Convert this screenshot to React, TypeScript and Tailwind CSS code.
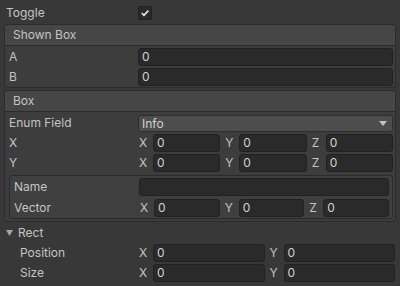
import React from "react";

const Field = ({ value = "", className = "" }: { value?: string; className?: string }) => (
  <div
    className={`h-[18px] bg-[#2a2a2a] border border-[#212121] rounded-[3px] pl-[3px] flex items-center text-[#d2d2d2] leading-none ${className}`}
  >
    {value}
  </div>
);

const Sub = ({ l, w }: { l: string; w?: string }) => (
  <div className={`flex items-center ${w ?? "flex-1"} min-w-0`}>
    <span className="w-[15px] shrink-0 pl-[1px] text-[#c4c4c4]">{l}</span>
    <Field value="0" className="flex-1 min-w-0" />
  </div>
);

const Vec3 = () => (
  <div className="flex-1 flex gap-[4px] min-w-0">
    <Sub l="X" />
    <Sub l="Y" />
    <Sub l="Z" />
  </div>
);

const Vec2 = () => (
  <div className="flex-1 flex gap-[4px] min-w-0">
    <Sub l="X" />
    <Sub l="Y" />
  </div>
);

const Row = ({ label, lw, children }: { label: string; lw: string; children: React.ReactNode }) => (
  <div className="flex items-center h-[18px]">
    <div className={`${lw} shrink-0 text-[#c4c4c4]`}>{label}</div>
    {children}
  </div>
);

const Header = ({ title }: { title: string }) => (
  <div className="h-[21px] bg-[#464646] border-b border-[#2b2b2b] flex items-center pl-[8px] text-[#c4c4c4] rounded-t-[3px]">
    {title}
  </div>
);

export default function App() {
  return (
    <div
      className="w-[400px] h-[286px] bg-[#383838] text-[12px] text-[#c4c4c4] overflow-hidden pt-[4px]"
      style={{ fontFamily: "Inter, 'Noto Sans', sans-serif" }}
    >
      {/* Toggle */}
      <div className="flex items-center h-[18px] pl-[6px]">
        <div className="w-[132px] shrink-0">Toggle</div>
        <div className="w-[14px] h-[14px] bg-[#2a2a2a] border border-[#202020] rounded-[2px] flex items-center justify-center">
          <svg width="10" height="10" viewBox="0 0 10 10">
            <path d="M1.8 5.2 L4 7.3 L8.3 2.6" stroke="#e8e8e8" strokeWidth="1.6" fill="none" />
          </svg>
        </div>
      </div>

      {/* Shown Box */}
      <div className="mt-[2px] ml-[4px] w-[392px] bg-[#3d3d3d] border border-[#2b2b2b] rounded-[3px]">
        <Header title="Shown Box" />
        <div className="flex flex-col gap-[2px] pt-[2px] pb-[1px] pl-[4px] pr-[2px]">
          <Row label="A" lw="w-[129px]">
            <Field value="0" className="flex-1" />
          </Row>
          <Row label="B" lw="w-[129px]">
            <Field value="0" className="flex-1" />
          </Row>
        </div>
      </div>

      {/* Box */}
      <div className="mt-[2px] ml-[4px] w-[392px] bg-[#3d3d3d] border border-[#2b2b2b] rounded-[3px]">
        <Header title="Box" />
        <div className="flex flex-col gap-[2px] pt-[2px] pb-[2px] pl-[4px] pr-[2px]">
          <Row label="Enum Field" lw="w-[129px]">
            <div className="flex-1 h-[17px] mt-[1px] bg-[#4d4d4d] border border-[#2e2e2e] rounded-[3px] flex items-center pl-[3px] pr-[5px] justify-between text-[#d2d2d2]">
              <span>Info</span>
              <svg width="8" height="6" viewBox="0 0 8 6">
                <path d="M0 0 H8 L4 5 Z" fill="#c4c4c4" />
              </svg>
            </div>
          </Row>
          <Row label="X" lw="w-[129px]">
            <Vec3 />
          </Row>
          <Row label="Y" lw="w-[129px]">
            <Vec3 />
          </Row>
          <div className="mt-[1px] bg-[#3f3f3f] border border-[#2b2b2b] rounded-[3px] pl-[4px] pr-[3px] pt-[2px] pb-[1px] flex flex-col gap-[3px]">
            <Row label="Name" lw="w-[125px]">
              <Field className="flex-1" />
            </Row>
            <Row label="Vector" lw="w-[125px]">
              <Vec3 />
            </Row>
          </div>
        </div>
      </div>

      {/* Rect */}
      <div className="flex items-center h-[18px] mt-[2px] pl-[6px]">
        <svg width="7" height="6" viewBox="0 0 7 6" className="mr-[5px]">
          <path d="M0 0 H7 L3.5 6 Z" fill="#a5a5a5" />
        </svg>
        <span>Rect</span>
      </div>
      <div className="flex flex-col gap-[2px] mt-[2px] pl-[20px] pr-[5px]">
        <Row label="Position" lw="w-[118px]">
          <Vec2 />
        </Row>
        <Row label="Size" lw="w-[118px]">
          <Vec2 />
        </Row>
      </div>
    </div>
  );
}
